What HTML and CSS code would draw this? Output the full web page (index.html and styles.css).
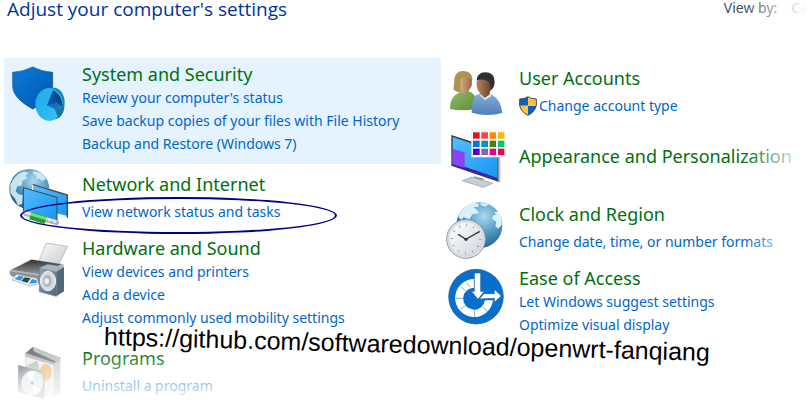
FILE: index.html
```html
<!DOCTYPE html>
<html lang="en">
<head>
<meta charset="utf-8">
<title>Control Panel</title>
<link rel="stylesheet" href="styles.css">
</head>
<body>
<div class="panel">
  <header class="top">
    <h1>Adjust your computer's settings</h1>
    <div class="viewby"><span>View by:</span><a href="#">Ca</a></div>
  </header>
  <main class="columns">
    <div class="column">
      <section class="item active">
        <svg class="icon" viewBox="12 9 216 180" aria-hidden="true">
          <defs>
            <linearGradient id="sh" x2="1" y2="1"><stop offset="0" stop-color="#0a7ad8"/><stop offset="1" stop-color="#0058b0"/></linearGradient>
            <linearGradient id="pie" x2="1" y2="1"><stop offset="0" stop-color="#20a8e8"/><stop offset="1" stop-color="#35c5f5"/></linearGradient>
          </defs>
          <path d="M38 52Q70 50 98 36Q126 50 158 52V92C158 122 128 146 98 162C66 144 38 122 38 92Z" fill="url(#sh)" stroke="#174e80" stroke-width="2"/>
          <path d="M150 98Q188 94 194 138Q196 178 172 191L148 197Z" fill="#128bb8"/>
          <ellipse cx="147" cy="148" rx="41" ry="49" fill="url(#pie)"/>
          <path d="M141 151L159 106Q181 118 188 153L164 157Z" fill="#0754a2"/>
          <path d="M159 106L170 143L188 153Q184 116 159 106Z" fill="#0a438c"/>
          <path d="M141 151L170 143L188 153L164 161Z" fill="#126fc4"/>
          <path d="M164 161L192 154Q192 179 175 190Z" fill="#15799f"/>
        </svg>
        <div class="text">
          <h2>System and Security</h2>
          <a href="#">Review your computer's status</a>
          <a href="#">Save backup copies of your files with File History</a>
          <a href="#">Backup and Restore (Windows 7)</a>
        </div>
      </section>
      <section class="item single">
        <svg class="icon" viewBox="12 24 216 180" aria-hidden="true">
          <defs>
            <radialGradient id="gl" cx=".6" cy=".3" r=".8"><stop offset="0" stop-color="#a8dbf0"/><stop offset=".55" stop-color="#448db8"/><stop offset="1" stop-color="#155680"/></radialGradient>
            <linearGradient id="scr" x2="1" y2="1"><stop offset="0" stop-color="#55bdff"/><stop offset="1" stop-color="#1695f0"/></linearGradient>
          </defs>
          <circle cx="88" cy="87" r="60" fill="url(#gl)"/>
          <path d="M31 75Q43 43 72 34L86 39L76 48L83 53L67 64L66 76L52 79L47 94L55 102L69 106L66 132L54 136L45 116L31 99ZM98 33L123 38L139 56L126 64L117 55L106 58L111 47L100 43Z" fill="#d7edf5" opacity=".9"/>
          <path d="M98 73L203 104V170L98 143Z" fill="url(#scr)" stroke="#e3edf0" stroke-width="4"/>
          <path d="M98 73L202 105V173" fill="none" stroke="#444b50" stroke-width="4"/>
          <path d="M70 83L171 112V182L70 154Z" fill="url(#scr)" stroke="#3c464c" stroke-width="3"/>
          <path d="M76 160L170 188" stroke="#a9b4b5" stroke-width="15" stroke-linecap="round"/>
          <path d="M78 158L166 184" stroke="#e5ebeb" stroke-width="9" stroke-linecap="round"/>
          <path d="M91 167L137 181" stroke="#289a38" stroke-width="23"/>
          <path d="M92 162L138 176" stroke="#75df77" stroke-width="9"/>
          <path d="M144 175L140 189M157 179L153 192" stroke="#97a19f" stroke-width="2"/>
        </svg>
        <div class="text">
          <h2>Network and Internet</h2>
          <a href="#">View network status and tasks</a>
        </div>
        <div class="circled"></div>
      </section>
      <section class="item">
        <svg class="icon" viewBox="12 -9 216 180" aria-hidden="true">
          <defs>
            <linearGradient id="pt" x2="0" y2="1"><stop offset="0" stop-color="#333"/><stop offset="1" stop-color="#929599"/></linearGradient>
            <linearGradient id="pp" x2="1" y2="1"><stop offset="0" stop-color="#fafafa"/><stop offset="1" stop-color="#c9cbce"/></linearGradient>
            <linearGradient id="sp" x2="1" y2="1"><stop offset="0" stop-color="#8fa0b0"/><stop offset="1" stop-color="#53677a"/></linearGradient>
          </defs>
          <path d="M117 77L139 24L203 34L175 92Z" fill="url(#pp)" stroke="#a5a7a9" stroke-width="2"/>
          <path d="M28 107L93 73L190 87L192 101L118 133L29 119Z" fill="#b2b8bd"/>
          <path d="M34 104L95 74L184 88L121 118Z" fill="url(#pt)"/>
          <path d="M29 109L119 122V145L34 124Z" fill="#88919a"/>
          <path d="M49 118L110 130L116 146L91 153L36 135Z" fill="#e5f1f7" stroke="#96a5af" stroke-width="2"/>
          <path d="M57 122L72 125L61 137L44 132Z" fill="#3f91da"/><path d="M74 127L92 130L82 143L64 138Z" fill="#244f38"/><path d="M96 132L109 136L111 143L87 146Z" fill="#3294d8"/>
          <path d="M118 99L169 110V184L118 170Z" fill="url(#sp)" stroke="#6c7e8d" stroke-width="2"/>
          <path d="M118 99L143 88L192 96L169 110Z" fill="#a6b4bd"/>
          <path d="M169 110L192 96V169L169 184Z" fill="#52697a"/>
          <ellipse cx="144" cy="138" rx="23" ry="29" fill="#d4dadc" stroke="#f1f3f4" stroke-width="3"/>
          <ellipse cx="142" cy="138" rx="15" ry="20" fill="#aeb9be" stroke="#eee" stroke-width="2"/>
          <ellipse cx="140" cy="139" rx="7" ry="9" fill="#e9eef0"/>
        </svg>
        <div class="text">
          <h2>Hardware and Sound</h2>
          <a href="#">View devices and printers</a>
          <a href="#">Add a device</a>
          <a href="#">Adjust commonly used mobility settings</a>
        </div>
      </section>
      <section class="item single">
        <svg class="icon" viewBox="12 51 216 180" aria-hidden="true">
          <defs><linearGradient id="cd" x2="1" y2="1"><stop offset="0" stop-color="#5e6b75"/><stop offset=".6" stop-color="#cbd2d6"/><stop offset="1" stop-color="#7d8a92"/></linearGradient></defs>
          <path d="M76 88L162 116V217L76 190Z" fill="#ededed" stroke="#cbcbcb" stroke-width="2"/>
          <path d="M162 116L181 101V205L162 217Z" fill="#d0d0d0"/>
          <path d="M76 85L98 66L182 99L163 115Z" fill="#77797a"/>
          <path d="M98 66L183 99L176 113L101 79Z" fill="#c2c3c3"/>
          <path d="M76 84L163 113V121L76 95Z" fill="#bbb"/>
          <path d="M76 124L112 107L121 145L80 143Z" fill="#adcab8"/>
          <ellipse cx="137" cy="142" rx="18" ry="26" fill="#f0bd72"/>
          <path d="M55 121L132 142V222L55 199Z" fill="url(#cd)" stroke="#83909a" stroke-width="2"/>
          <ellipse cx="97" cy="174" rx="31" ry="36" fill="#e3e9e9" stroke="#f7f8f8" stroke-width="2"/>
          <path d="M97 174L79 146Q91 137 103 140ZM97 174L121 195Q113 207 101 208Z" fill="#fff"/>
          <circle cx="96" cy="174" r="9" fill="#b8c2c7" stroke="#fff" stroke-width="3"/><circle cx="96" cy="174" r="3" fill="#78858d"/>
        </svg>
        <div class="text">
          <h2>Programs</h2>
          <a href="#">Uninstall a program</a>
        </div>
      </section>
    </div>
    <div class="column second">
      <section class="item single">
        <svg class="icon" viewBox="18 21 216 180" aria-hidden="true">
          <defs>
            <linearGradient id="w" x2="1" y2="1"><stop offset="0" stop-color="#94bf68"/><stop offset="1" stop-color="#5c8b38"/></linearGradient>
            <linearGradient id="m" x2="0" y2="1"><stop offset="0" stop-color="#82b0e0"/><stop offset="1" stop-color="#507fb7"/></linearGradient>
            <linearGradient id="f1" x2="1"><stop offset="0" stop-color="#d6ad80"/><stop offset="1" stop-color="#9a6548"/></linearGradient>
            <linearGradient id="f2" x2="1"><stop offset="0" stop-color="#b48560"/><stop offset="1" stop-color="#6d4229"/></linearGradient>
          </defs>
          <path d="M45 162Q44 131 62 119L79 109L107 110L120 123V162Q80 170 45 162Z" fill="url(#w)"/>
          <path d="M55 103Q58 90 58 70Q62 49 84 48Q108 48 112 69L109 95L94 112Q67 116 55 103Z" fill="#aa9450"/>
          <path d="M77 72Q92 64 109 72Q114 93 102 105L98 118L77 113Q75 93 77 72Z" fill="url(#f1)"/>
          <path d="M110 173Q109 134 124 120L143 113L171 119Q198 134 202 174Q157 187 110 173Z" fill="url(#m)"/>
          <path d="M139 111L165 111L168 124L150 135L136 122Z" fill="#e4eef8"/>
          <path d="M125 76Q126 53 151 52Q178 52 179 79Q179 101 165 107L157 78Z" fill="#323131"/>
          <path d="M125 77Q139 68 162 80L168 97L163 119L149 129L136 116Q122 99 125 77Z" fill="url(#f2)"/>
        </svg>
        <div class="text">
          <h2>User Accounts</h2>
          <a class="shielded" href="#"><svg class="shield" viewBox="0 0 54 60" aria-hidden="true"><clipPath id="sc"><path d="M27 2Q36 9 52 9V27Q50 46 27 58Q4 46 2 27V9Q18 9 27 2Z"/></clipPath><g clip-path="url(#sc)"><path d="M0 0H27V29H0ZM27 29H54V60H27Z" fill="#0862bd"/><path d="M27 0H54V29H27ZM0 29H27V60H0Z" fill="#ffc145"/></g><path d="M27 2Q36 9 52 9V27Q50 46 27 58Q4 46 2 27V9Q18 9 27 2Z" fill="none" stroke="#41474b" stroke-width="3"/></svg>Change account type</a>
        </div>
      </section>
      <section class="item heading-only">
        <svg class="icon" viewBox="18 12 216 180" aria-hidden="true">
          <path d="M117 163L146 170L144 184L118 181Z" fill="#87939e"/>
          <path d="M82 176L111 165L173 184L145 196Z" fill="#c5ced6" stroke="#8d99a4" stroke-width="2"/>
          <path d="M49 39L194 86V181L49 131Z" fill="#303e49"/>
          <path d="M53 45L188 90V174L53 127Z" fill="url(#scr)"/>
          <path d="M53 81L89 91V137L53 127Z" fill="#8c43f5"/><path d="M53 127L89 137L89 134L188 168V174L53 130Z" fill="#4b16b8"/>
          <path d="M190 87L196 83V178L190 181Z" fill="#bac2c8"/>
          <path d="M110 27H212V105H110Z" fill="#fff" stroke="#dde5ed" stroke-width="2"/>
          <g stroke="#0002"><path d="M114 31h20v19h-20z" fill="#e81123"/><path d="M139 31h20v19h-20z" fill="#ff4343"/><path d="M164 31h19v19h-19z" fill="#ff8c00"/><path d="M189 31h19v19h-19z" fill="#ffb900"/><path d="M114 56h20v19h-20z" fill="#0078d7"/><path d="M139 56h20v19h-20z" fill="#0099bc"/><path d="M164 56h19v19h-19z" fill="#498205"/><path d="M189 56h19v19h-19z" fill="#00cc6a"/><path d="M114 80h20v19h-20z" fill="#5200cc"/><path d="M139 80h20v19h-20z" fill="#8764b8"/><path d="M164 80h19v19h-19z" fill="#e3008c"/><path d="M189 80h19v19h-19z" fill="#ee005c"/></g>
        </svg>
        <div class="text"><h2>Appearance and Personalization</h2></div>
      </section>
      <section class="item single">
        <svg class="icon" viewBox="18 24 216 180" aria-hidden="true">
          <defs><linearGradient id="ck" x2="1" y2="1"><stop offset="0" stop-color="#fff"/><stop offset="1" stop-color="#cfd5dc"/></linearGradient></defs>
          <circle cx="133" cy="106" r="69" fill="url(#gl)"/>
          <path d="M70 80Q82 48 116 38L132 41L130 50L115 52L126 60L131 70L112 73L103 88L85 82L80 91ZM133 39L162 41L151 50L139 46ZM177 66L190 65Q202 83 200 105L189 116L181 108L184 95L171 86L175 76L184 74Z" fill="#d8f1fa"/>
          <circle cx="93" cy="147" r="58" fill="#dce3e8" stroke="#8e9ba5" stroke-width="3"/>
          <circle cx="93" cy="147" r="51" fill="url(#ck)" stroke="#c5ccd2" stroke-width="2"/>
          <circle cx="93" cy="147" r="42" fill="none" stroke="#77828a" stroke-width="7" stroke-dasharray="2 20"/>
          <path d="M69 133L93 148L134 124" fill="none" stroke="#30363a" stroke-width="4"/><circle cx="93" cy="148" r="5" fill="#30363a"/>
        </svg>
        <div class="text">
          <h2>Clock and Region</h2>
          <a href="#">Change date, time, or number formats</a>
        </div>
      </section>
      <section class="item">
        <svg class="icon" viewBox="18 6 216 180" aria-hidden="true">
          <circle cx="123" cy="110" r="82" fill="#0870cc" stroke="#1b5b94" stroke-width="2"/>
          <path d="M118 57A57 57 0 1 0 174 121H150A33 33 0 1 1 118 83Z" fill="#fff"/>
          <path d="M63 115H84M77 80L91 91M93 65L104 80M77 147L91 137M119 147V171M143 139L158 156" stroke="#4189bd" stroke-width="2"/>
          <path d="M118 39H137V94H148L129 118L109 94H118Z" fill="#fff" stroke="#1763a2" stroke-width="2"/>
          <path d="M133 117L147 101H178V88L199 108L178 127V115Z" fill="#fff" stroke="#1763a2" stroke-width="2"/>
        </svg>
        <div class="text">
          <h2>Ease of Access</h2>
          <a href="#">Let Windows suggest settings</a>
          <a href="#">Optimize visual display</a>
        </div>
      </section>
    </div>
  </main>
  <div class="fade fade-right"></div>
  <div class="fade fade-bottom"></div>
  <div class="watermark">https://github.com/softwaredownload/openwrt-fanqiang</div>
</div>
</body>
</html>
```
FILE: styles.css
```css
* { box-sizing: border-box; }
body {
  margin: 0;
  background: #fff;
  font-family: "Noto Sans", "Open Sans", sans-serif;
  font-size: 14px;
  line-height: 23px;
}
.panel { position: relative; min-height: 100vh; overflow: hidden; }
.top {
  display: flex;
  justify-content: space-between;
  height: 58px;
  padding: 0 0 0 7px;
}
h1 {
  margin: 0;
  font-family: "Open Sans", "Noto Sans", sans-serif;
  font-size: 19px;
  font-weight: 400;
  line-height: 18px;
  color: #003399;
}
.viewby { display: flex; gap: 14px; line-height: 16px; color: #404e60; }
.columns {
  display: grid;
  grid-template-columns: 437fr 367fr;
  padding-left: 4px;
  white-space: nowrap;
}
.column { display: flex; flex-direction: column; gap: 4px; min-width: 0; }
.second { padding-top: 4px; }
.item { position: relative; display: flex; gap: 6px; }
.active { background: #e5f3ff; }
.icon { flex: none; width: 72px; height: 60px; overflow: visible; }
.text { display: flex; flex-direction: column; align-items: flex-start; padding: 4px 0 9px; }
.single .text { gap: 4px; padding-bottom: 5px; }
.heading-only { min-height: 68px; }
.heading-only .text { padding-top: 18px; }
h2 {
  margin: 0;
  font-size: 18px;
  font-weight: 400;
  line-height: 24px;
  color: #00700f;
}
a { color: #0066cc; text-decoration: none; }
.shielded { display: flex; align-items: center; gap: 2px; }
.shield { width: 18px; height: 20px; }
.circled {
  position: absolute;
  left: 16px;
  top: 29px;
  width: 317px;
  height: 37px;
  border: 2px solid #000080;
  border-radius: 50%;
  pointer-events: none;
}
.fade { position: absolute; right: 0; bottom: 0; pointer-events: none; }
.fade-right { top: 0; width: 66px; background: linear-gradient(to right, transparent, #fff); }
.fade-bottom { left: 0; height: 58px; background: linear-gradient(to bottom, transparent, #fff); }
.watermark {
  position: absolute;
  left: 104px;
  top: 330px;
  font-family: "Liberation Sans", Arial, sans-serif;
  font-size: 25px;
  line-height: 28px;
  color: #000;
  white-space: nowrap;
  transform: rotate(1.5deg);
}
```
